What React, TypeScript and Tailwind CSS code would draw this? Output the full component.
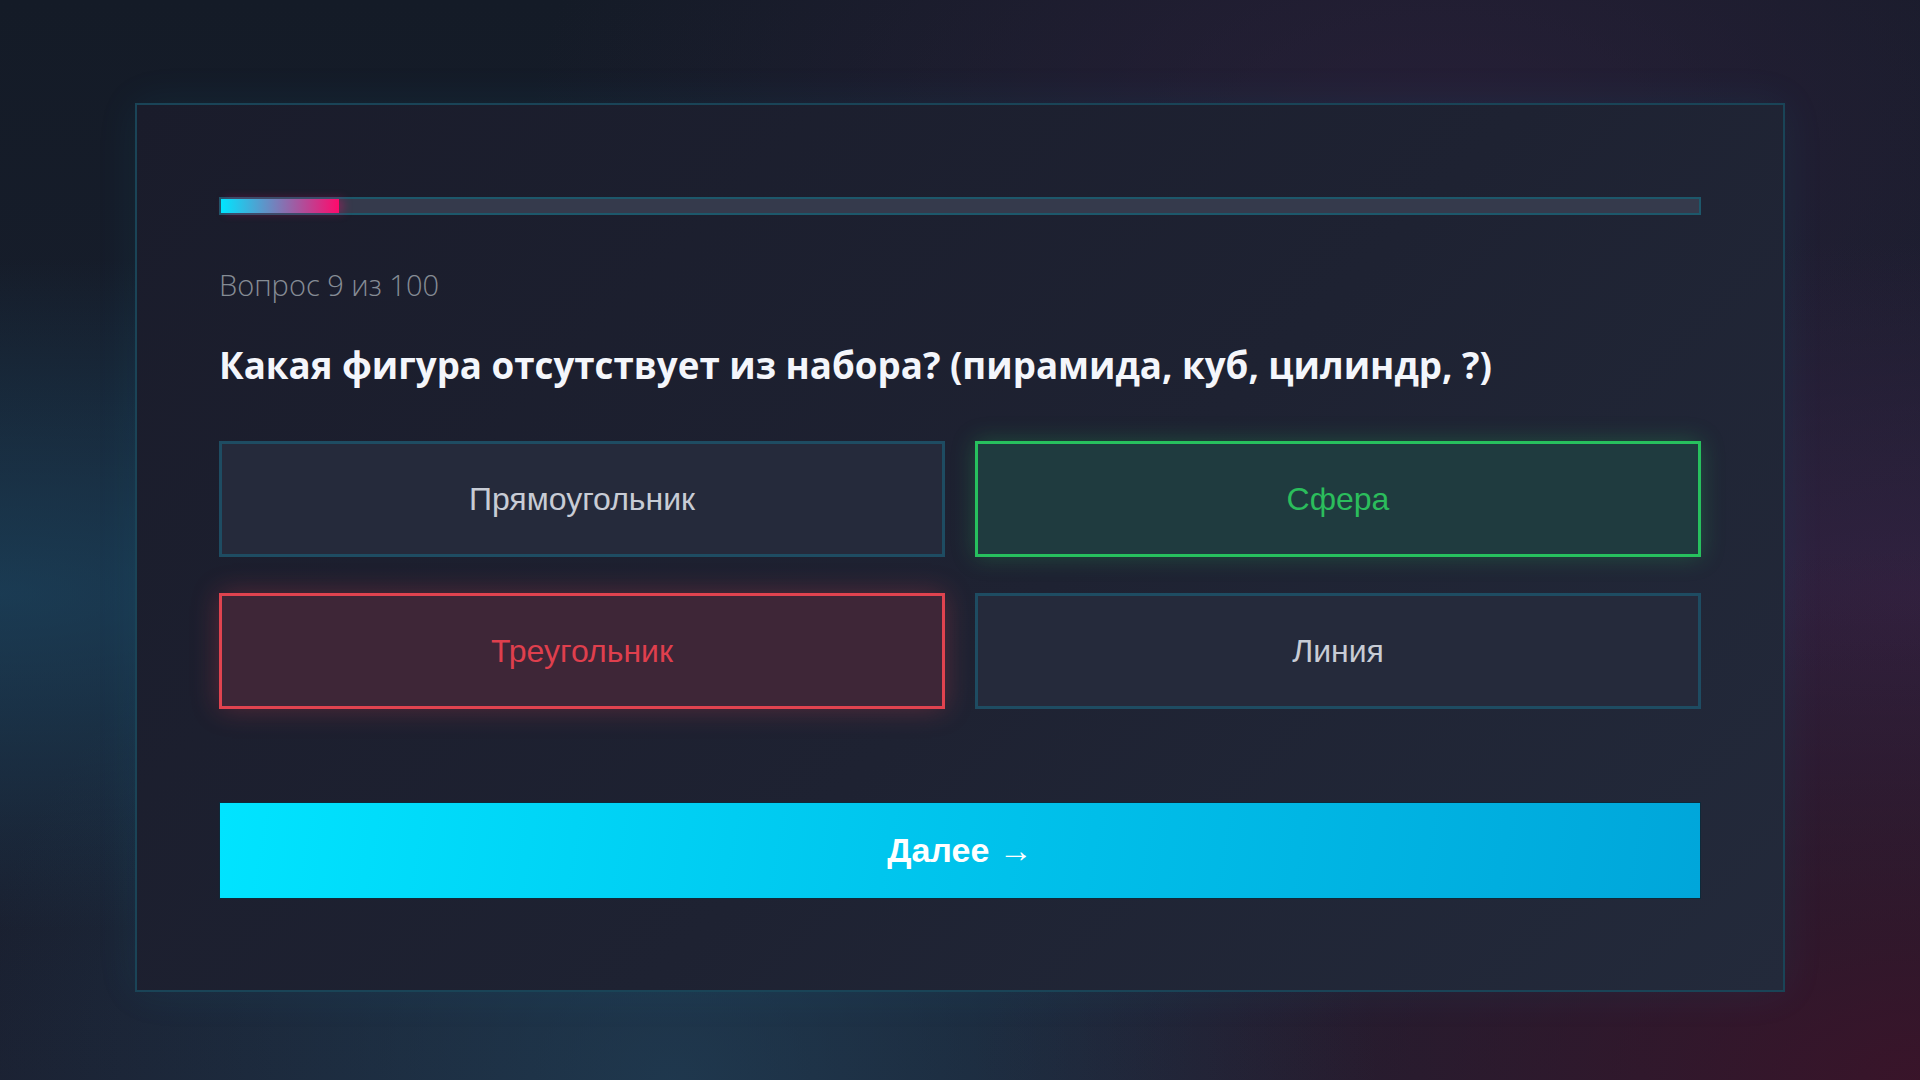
import { useState } from "react";

type Opt = { label: string; state: "idle" | "correct" | "wrong" };

const options: Opt[] = [
  { label: "Прямоугольник", state: "idle" },
  { label: "Сфера", state: "correct" },
  { label: "Треугольник", state: "wrong" },
  { label: "Линия", state: "idle" },
];

const optClass = {
  idle: "bg-[#252a3b] border-[#1e4c62] text-[#c8ccd5]",
  correct:
    "bg-[#1f3b3f] border-[#27c05e] text-[#2bbd5c] shadow-[0_0_22px_rgba(39,192,94,0.28)]",
  wrong:
    "bg-[#3e2637] border-[#e0434f] text-[#df3f4d] shadow-[0_0_26px_rgba(224,67,79,0.3)]",
};

const App = () => {
  const [current] = useState(9);
  const total = 100;

  return (
    <div className="min-h-screen w-full flex justify-center pt-[103px] bg-[#1a1c2b] bg-[radial-gradient(ellipse_at_0%_55%,rgba(28,78,108,0.6),transparent_40%),radial-gradient(ellipse_at_35%_100%,rgba(34,74,100,0.55),transparent_40%),radial-gradient(ellipse_at_100%_100%,rgba(62,18,40,0.85),transparent_35%),radial-gradient(ellipse_at_100%_55%,rgba(54,34,68,0.8),transparent_42%),radial-gradient(ellipse_at_75%_15%,rgba(54,34,68,0.55),transparent_45%),linear-gradient(180deg,#141b27,#1b2132)]">
      <div className="w-[1650px] h-[889px] border-2 border-[#1a4457] bg-[linear-gradient(135deg,#1a1c2b_0%,#1e2232_55%,#232a3b_100%)] shadow-[0_0_40px_rgba(0,170,220,0.08)] px-[82px] pt-[92px] pb-[91px] flex flex-col">
        <div className="h-[18px] border-2 border-[#1d586b] bg-[#353a4c] flex">
          <div className="h-full w-[8%] bg-[linear-gradient(90deg,#00e5ff,#ff0a6c)] shadow-[4px_0_10px_rgba(255,10,108,0.35)]" />
        </div>

        <div className="mt-[52px] text-[29px] leading-[36px] font-light text-[#868c95] font-['Open_Sans',sans-serif]">
          Вопрос {current} из {total}
        </div>

        <h1 className="mt-[40px] text-[36.7px] leading-[44px] font-bold text-[#f4f6fb] font-['Open_Sans',sans-serif]">
          Какая фигура отсутствует из набора? (пирамида, куб, цилиндр, ?)
        </h1>

        <div className="mt-[54px] grid grid-cols-2 gap-x-[30px] gap-y-[36px]">
          {options.map((o, i) => (
            <button
              key={i}
              className={`h-[116px] border-[3px] flex items-center justify-center text-[32px] font-['Liberation_Sans',Arial,sans-serif] ${optClass[o.state]}`}
            >
              {o.label}
            </button>
          ))}
        </div>

        <button className="mt-[93px] h-[97px] w-full border border-[#0d2a3a] bg-[linear-gradient(100deg,#00e4ff_0%,#00c6ee_45%,#00a6da_100%)] text-white text-[34px] font-bold font-['Liberation_Sans',Arial,sans-serif] flex items-center justify-center">
          Далее →
        </button>
      </div>
    </div>
  );
};

export default App;
